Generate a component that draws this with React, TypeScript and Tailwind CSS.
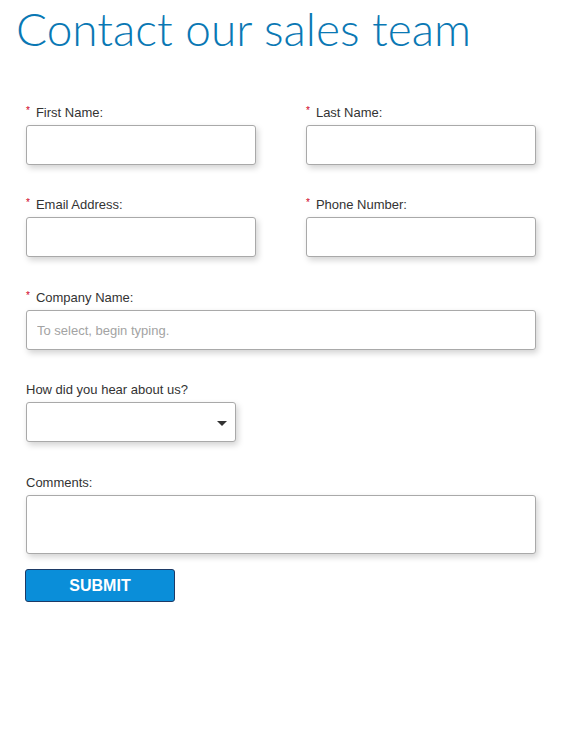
import { useState } from 'react';

const font = { fontFamily: '"Liberation Sans", Arial, sans-serif' };

function Label({ text, required }: { text: string; required?: boolean }) {
  return (
    <label className="flex h-4 translate-y-px items-center text-[13px] leading-4 text-[#333]">
      {required && <span className="mr-[6px] -translate-y-[2px] text-[10px] text-[#d0021b]">*</span>}
      {text}
    </label>
  );
}

const inputCls =
  'block h-10 w-full rounded-[3px] border border-[#a9a9a9] bg-white px-[10px] text-[13px] text-[#333] shadow-[2px_3px_6px_rgba(0,0,0,0.18)] outline-none placeholder:text-[#a3a3a3]';

function Field({ label, required, className = '', placeholder }: { label: string; required?: boolean; className?: string; placeholder?: string }) {
  return (
    <div className={`flex flex-col gap-[5px] ${className}`}>
      <Label text={label} required={required} />
      <input type="text" className={inputCls} placeholder={placeholder} />
    </div>
  );
}

export default function App() {
  const [source, setSource] = useState('');

  return (
    <div className="min-h-[737px] bg-white" style={font}>
      <div className="px-[26px] pt-[2px]">
        <h1
          className="-ml-[10px] text-[46px] font-light leading-[54px] text-[#0a78b4]"
          style={{ fontFamily: 'Lato, "Open Sans", sans-serif' }}
        >
          Contact our sales team
        </h1>

        <form className="mt-[48px] flex w-[510px] flex-col gap-8" onSubmit={(e) => e.preventDefault()}>
          <div className="grid grid-cols-[230px_230px] gap-x-[50px]">
            <Field label="First Name:" required />
            <Field label="Last Name:" required />
          </div>
          <div className="-mt-[1px] grid grid-cols-[230px_230px] gap-x-[50px]">
            <Field label="Email Address:" required />
            <Field label="Phone Number:" required />
          </div>
          <Field label="Company Name:" required placeholder="To select, begin typing." />

          <div className="-mt-[1px] flex flex-col gap-[5px]">
            <Label text="How did you hear about us?" />
            <div className="relative w-[210px]">
              <select
                value={source}
                onChange={(e) => setSource(e.target.value)}
                className={`${inputCls} appearance-none`}
              >
                <option value=""></option>
                <option value="search">Search engine</option>
                <option value="referral">Referral</option>
                <option value="event">Event</option>
              </select>
              <span className="pointer-events-none absolute right-[9px] top-[19px] h-0 w-0 border-x-[5px] border-t-[5px] border-x-transparent border-t-[#333]" />
            </div>
          </div>

          <div className="flex flex-col gap-[5px]">
            <Label text="Comments:" />
            <textarea className={`${inputCls} h-[59px] resize-none py-2`} />
          </div>

          <button
            type="submit"
            className="-mt-[17px] -ml-[1px] h-[33px] w-[150px] rounded-[3px] border border-[#1d3a66] bg-[#0a8ed9] text-[16px] font-bold text-white"
          >
            SUBMIT
          </button>
        </form>
      </div>
    </div>
  );
}
